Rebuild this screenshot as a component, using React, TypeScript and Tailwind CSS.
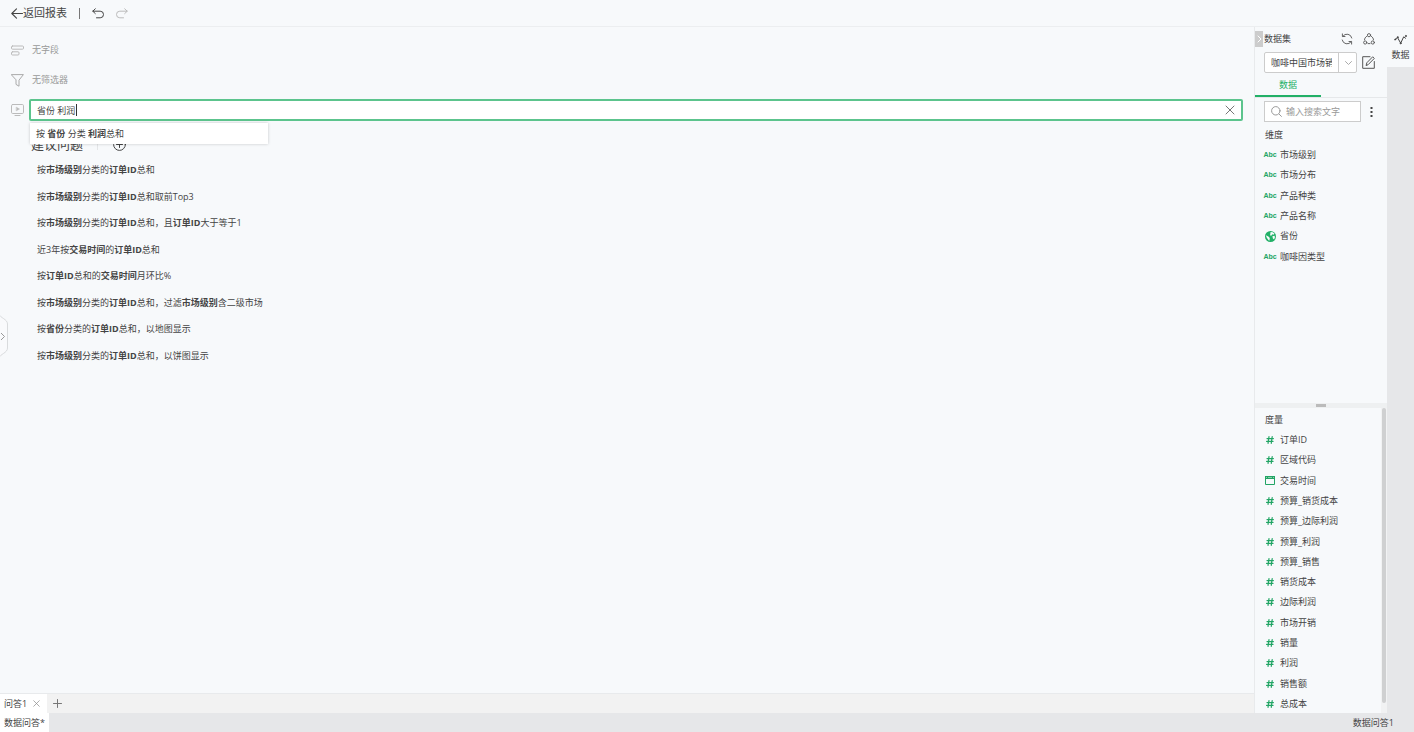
import { ReactNode, useState } from 'react'

const dimensions = [
  { name: '市场级别', type: 'text' },
  { name: '市场分布', type: 'text' },
  { name: '产品种类', type: 'text' },
  { name: '产品名称', type: 'text' },
  { name: '省份', type: 'geo' },
  { name: '咖啡因类型', type: 'text' },
]

const measures = [
  { name: '订单ID', type: 'number' },
  { name: '区域代码', type: 'number' },
  { name: '交易时间', type: 'date' },
  { name: '预算_销货成本', type: 'number' },
  { name: '预算_边际利润', type: 'number' },
  { name: '预算_利润', type: 'number' },
  { name: '预算_销售', type: 'number' },
  { name: '销货成本', type: 'number' },
  { name: '边际利润', type: 'number' },
  { name: '市场开销', type: 'number' },
  { name: '销量', type: 'number' },
  { name: '利润', type: 'number' },
  { name: '销售额', type: 'number' },
  { name: '总成本', type: 'number' },
]

// parts between asterisks are field names and are drawn bold
const questions = [
  '按*市场级别*分类的*订单ID*总和',
  '按*市场级别*分类的*订单ID*总和取前Top3',
  '按*市场级别*分类的*订单ID*总和，且*订单ID*大于等于1',
  '近3年按*交易时间*的*订单ID*总和',
  '按*订单ID*总和的*交易时间*月环比%',
  '按*市场级别*分类的*订单ID*总和，过滤*市场级别*含二级市场',
  '按*省份*分类的*订单ID*总和，以地图显示',
  '按*市场级别*分类的*订单ID*总和，以饼图显示',
]

interface IconProps {
  className: string
  box: string
  children: ReactNode
}

const Icon = ({ className, box, children }: IconProps) => (
  <svg
    className={className}
    viewBox={box}
    fill="none"
    stroke="currentColor"
    strokeLinecap="round"
    strokeLinejoin="round"
    aria-hidden="true"
  >
    {children}
  </svg>
)

const Cross = ({ className }: { className: string }) => (
  <Icon className={className} box="0 0 10 10">
    <path d="M1 1l8 8M9 1l-8 8" />
  </Icon>
)

const Question = ({ text }: { text: string }) => (
  <>
    {text.split('*').map((part, i) =>
      i % 2 ? (
        <b key={i} className="font-bold">
          {part}
        </b>
      ) : (
        part
      )
    )}
  </>
)

const FieldIcon = ({ type }: { type: string }) => {
  if (type === 'text') {
    return (
      <span className="font-['Liberation_Sans',sans-serif] text-[7px] leading-[10px] font-bold">
        Abc
      </span>
    )
  }
  if (type === 'geo') {
    return (
      <svg className="size-[11px]" viewBox="0 0 11 11" aria-hidden="true">
        <circle cx="5.5" cy="5.5" r="5.5" fill="#22b067" />
        <path
          d="M5.6 .9l2.2 .3 1.8 1.6-1.2 .9-1.2-.5-.9 1.6-1.3-.6.3-1.3zM.8 4.2l2.6 1.2 1.4 1.6-.4 2.8L3.6 9.3 1.8 6.8zM7.4 5.2l2-.5.6 1.4-.9 2.3-1.2-.9z"
          fill="#f7f9fb"
        />
      </svg>
    )
  }
  if (type === 'date') {
    return (
      <svg className="h-[9px] w-[10px]" viewBox="0 0 10 9" aria-hidden="true">
        <path d="M.5 .5h9v8h-9z" fill="none" stroke="#22a565" />
        <path d="M0 0h10v3H0z" fill="#22a565" />
        <path d="M1 1.5h1M3 1.5h4M8 1.5h1" stroke="#a6dcc0" strokeWidth=".8" />
      </svg>
    )
  }
  return (
    <Icon className="size-2" box="0 0 8 8">
      <path d="M3 .7L2 7.3M6.2 .7l-1 6.6M1 2.6h6.4M.6 5.4H7" strokeWidth="1.2" />
    </Icon>
  )
}

interface FieldListProps {
  fields: { name: string; type: string }[]
  className: string
}

const FieldList = ({ fields, className }: FieldListProps) => (
  <ul className={className}>
    {fields.map((field) => (
      <li key={field.name} className="flex items-center gap-1 pl-[9px]">
        <span className="flex w-3 shrink-0 justify-center text-[#22a565]">
          <FieldIcon type={field.type} />
        </span>
        {field.name}
      </li>
    ))}
  </ul>
)

const Toolbar = () => (
  <header className="flex h-[27px] shrink-0 items-center border-b border-[#eceef0] pl-[11px]">
    <button className="flex items-center text-[11px]">
      <Icon className="h-[11px] w-3" box="0 0 12 11">
        <path d="M11.5 5.5H.8M5.5 .8L.8 5.5l4.7 4.7" strokeWidth="1.1" />
      </Icon>
      返回报表
    </button>
    <span className="ml-3 h-[11px] w-px bg-[#777]" />
    <button className="ml-3" aria-label="撤销">
      <Icon className="h-[11px] w-3" box="0 0 12 11">
        <path d="M3.3 .8L.8 3.2l2.5 2.4M.8 3.2h7.4a3.2 3.2 0 0 1 0 6.6H4.5" />
      </Icon>
    </button>
    <button className="ml-3 text-[#bbb]" aria-label="重做">
      <Icon className="h-[11px] w-3" box="0 0 12 11">
        <path d="M8.7 .8l2.5 2.4-2.5 2.4M11.2 3.2H3.8a3.2 3.2 0 0 0 0 6.6h3.7" />
      </Icon>
    </button>
  </header>
)

const QueryBox = () => {
  const [query, setQuery] = useState('省份 利润')

  return (
    <div className="mt-[11px] flex items-center">
      <Icon className="h-3 w-[13px] shrink-0 text-[#bbb]" box="0 0 13 12">
        <rect x=".5" y=".5" width="12" height="9" rx="1.2" />
        <path d="M4 11.5h5" />
        <path d="M5.5 3.3l3 1.7-3 1.7z" fill="currentColor" strokeWidth=".5" />
      </Icon>
      <div className="relative ml-[5px] flex-1">
        <input
          aria-label="问题"
          className="block h-[22px] w-full rounded-[2px] border-2 border-[#5cc48d] bg-white pr-6 pl-[6px] outline-none"
          value={query}
          onChange={(e) => setQuery(e.target.value)}
        />
        <span className="absolute top-[5px] left-[47px] h-3 w-px bg-[#333]" />
        <button
          className="absolute top-[6px] right-2 text-[#777]"
          aria-label="清空"
          onClick={() => setQuery('')}
        >
          <Cross className="size-[10px]" />
        </button>
        <button className="absolute top-6 left-px z-10 h-[21px] w-[238px] bg-white pl-[6px] text-left shadow-[0_0_3px_rgba(0,0,0,0.2)]">
          <Question text="按 *省份* 分类 *利润*总和" />
        </button>
      </div>
    </div>
  )
}

const QuestionPane = () => (
  <main className="relative flex-1 overflow-hidden pt-[15px] pr-[11px] pl-[11px]">
    <div className="flex h-4 items-center gap-2 text-[#999]">
      <Icon className="h-[11px] w-[13px] text-[#bbb]" box="0 0 13 11">
        <rect x=".5" y="1" width="12" height="3.2" rx="1" />
        <rect x=".5" y="6.8" width="7.5" height="3.2" rx="1" />
      </Icon>
      无字段
    </div>
    <div className="mt-[14px] flex h-4 items-center gap-2 text-[#999]">
      <Icon className="h-[13px] w-[13px] text-[#aaa]" box="0 0 13 13">
        <path d="M.6 .6h11.8L8 6.2v6L5 10.4V6.2z" />
      </Icon>
      无筛选器
    </div>
    <QueryBox />
    <section className="pl-5">
      <div className="mt-[13px] mb-[3px] flex h-5 items-center">
        <h2 className="text-[13px]">建议问题</h2>
        <span className="ml-[14px] h-3 w-px bg-[#e4e6e8]" />
        <button className="ml-[15px]" aria-label="添加问题">
          <Icon className="size-[13px]" box="0 0 13 13">
            <circle cx="6.5" cy="6.5" r="5.9" />
            <path d="M6.5 3.5v6M3.5 6.5h6" />
          </Icon>
        </button>
      </div>
      <ul className="grid h-[212px] grid-rows-8 pl-[6px]">
        {questions.map((question) => (
          <li key={question} className="flex items-center">
            <button>
              <Question text={question} />
            </button>
          </li>
        ))}
      </ul>
    </section>
    <button className="absolute top-[286px] left-0" aria-label="展开">
      <svg className="h-[46px] w-2" viewBox="0 0 8 46" fill="none">
        <path
          d="M-1 1C0 5 7.5 6 7.5 11v24C7.5 40 0 41-1 45z"
          fill="#f9fafc"
          stroke="#d9dbdd"
        />
        <path d="M1 20l3.5 3.5L1 27" stroke="#999" />
      </svg>
    </button>
  </main>
)

const TabBar = () => (
  <div className="flex h-5 shrink-0 items-center border-t border-[#e8eaec] bg-[#f2f2f2]">
    <div className="flex h-full items-center gap-[6px] bg-white pr-[7px] pl-1">
      <button>问答1</button>
      <button className="text-[#888]" aria-label="关闭">
        <Cross className="size-[7px]" />
      </button>
    </div>
    <button className="ml-[6px] text-[#777]" aria-label="新建">
      <Icon className="size-[9px]" box="0 0 9 9">
        <path d="M4.5 .5v8M.5 4.5h8" />
      </Icon>
    </button>
  </div>
)

const DataPanel = () => (
  <aside className="flex w-[133px] shrink-0 flex-col border-l border-[#e8eaec]">
    <div className="mt-1 flex h-4 items-center pr-3">
      <button
        className="flex h-4 w-2 items-center justify-center bg-[#ccc] text-white"
        aria-label="收起"
      >
        <Icon className="h-2 w-[5px]" box="0 0 5 8">
          <path d="M1 1l3 3-3 3" />
        </Icon>
      </button>
      <h2 className="ml-px flex-1">数据集</h2>
      <button className="text-[#555]" aria-label="刷新">
        <Icon className="size-3" box="0 0 12 12">
          <path
            d="M10.8 5A5 5 0 0 0 1.9 3.2M1.2 7a5 5 0 0 0 8.9 1.8M1.4 .9v2.6H4M10.6 11.1V8.5H8"
            strokeWidth=".9"
          />
        </Icon>
      </button>
      <button className="ml-[10px] text-[#555]" aria-label="关联">
        <Icon className="size-3" box="0 0 12 12">
          <circle cx="6" cy="2.2" r="1.6" strokeWidth=".9" />
          <circle cx="2.2" cy="9.5" r="1.6" strokeWidth=".9" />
          <circle cx="9.8" cy="9.5" r="1.6" strokeWidth=".9" />
          <path
            d="M3.6 3.4C2.3 4.3 1.6 5.4 1.5 6.8M8.4 3.4c1.3.9 2 2 2.1 3.4M5 10.6h2"
            strokeWidth=".9"
          />
        </Icon>
      </button>
    </div>
    <div className="mt-[5px] flex items-center pr-3 pl-[9px]">
      <div className="relative flex-1">
        <select
          aria-label="数据集"
          className="block h-[21px] w-full appearance-none rounded-[2px] border border-[#ccc] bg-white pr-6 pl-[6px]"
        >
          <option>咖啡中国市场销售数据</option>
        </select>
        <span className="pointer-events-none absolute inset-y-0 right-0 flex w-[19px] items-center justify-center border-l border-[#ccc] text-[#aaa]">
          <Icon className="h-1 w-[7px]" box="0 0 7 4">
            <path d="M.5 .5l3 3 3-3" />
          </Icon>
        </span>
      </div>
      <button className="ml-[5px] text-[#555]" aria-label="编辑">
        <Icon className="size-[13px]" box="0 0 13 13">
          <path d="M8 .7H.7v11.6h11.6V5.5" />
          <path d="M4.2 9.2l.6-2.4L10.7 .8l1.6 1.6-5.9 6z" />
        </Icon>
      </button>
    </div>
    <div className="mt-[2px] flex border-b border-[#e6e8ea]">
      <button className="h-[22px] w-[66px] border-b-2 border-[#22b067] text-[#22b067]">
        数据
      </button>
    </div>
    <div className="mt-[3px] flex items-center pr-[14px] pl-[9px]">
      <label className="flex h-[21px] min-w-0 flex-1 items-center gap-1 border border-[#ccc] bg-white pl-[6px]">
        <Icon className="size-[11px] shrink-0 text-[#999]" box="0 0 11 11">
          <circle cx="4.8" cy="4.8" r="4.2" />
          <path d="M8 8l2.4 2.4" />
        </Icon>
        <input
          aria-label="搜索"
          placeholder="输入搜索文字"
          className="w-full min-w-0 outline-none placeholder:text-[#999]"
        />
      </label>
      <button className="ml-[9px]" aria-label="更多">
        <svg className="h-[10px] w-[3px]" viewBox="0 0 3 10" fill="#444">
          <path d="M.5 0h2v2h-2zM.5 4h2v2h-2zM.5 8h2v2h-2z" />
        </svg>
      </button>
    </div>
    <div className="h-[281px] shrink-0 overflow-hidden pt-[3px]">
      <h3 className="pl-[10px] leading-5">维度</h3>
      <FieldList fields={dimensions} className="grid h-[122px] grid-rows-6" />
    </div>
    <div className="flex h-[5px] shrink-0 items-center justify-center bg-[#eef0f1]">
      <span className="h-[3px] w-[10px] bg-[#bbb]" />
    </div>
    <div className="flex min-h-0 flex-1">
      <div className="flex-1 overflow-hidden pt-[2px]">
        <h3 className="pl-[10px] leading-5">度量</h3>
        <FieldList fields={measures} className="grid h-[284px] grid-rows-14" />
      </div>
      <div className="w-[6px] bg-[#f1f2f3] px-px pb-[10px]">
        <div className="h-full rounded-full bg-[#cfd0d1]" />
      </div>
    </div>
  </aside>
)

const SideRail = () => (
  <nav className="w-[27px] shrink-0 bg-[#e6e7e9]">
    <button className="flex h-10 w-full flex-col items-center bg-[#f7f9fb] pt-[7px]">
      <Icon className="h-[11px] w-[13px]" box="0 0 13 11">
        <path d="M1 5.5l2.5-2 3.2 5.7 3-6.4 1.8 1.4" />
        <circle cx="1.2" cy="5.5" r=".5" />
        <circle cx="3.7" cy="3.2" r=".5" />
        <circle cx="6.6" cy="9.3" r=".5" />
        <circle cx="11.8" cy="2" r=".5" />
      </Icon>
      <span className="mt-1">数据</span>
    </button>
  </nav>
)

export default function App() {
  return (
    <div className="flex h-screen flex-col overflow-hidden bg-[#f7f9fb] font-['Open_Sans','Noto_Sans_CJK_SC',sans-serif] text-[9px] leading-3 text-[#444]">
      <Toolbar />
      <div className="flex min-h-0 flex-1">
        <div className="flex min-w-0 flex-1 flex-col">
          <QuestionPane />
          <TabBar />
        </div>
        <DataPanel />
        <SideRail />
      </div>
      <footer className="flex h-[19px] shrink-0 items-center justify-between bg-[#e6e7e9] pr-5">
        <button className="h-full bg-white px-1">数据问答*</button>
        <span>数据问答1</span>
      </footer>
    </div>
  )
}
